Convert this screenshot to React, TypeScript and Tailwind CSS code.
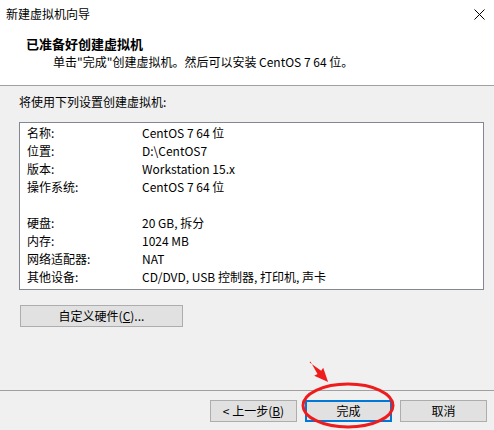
import React from "react";

const rows: [string, string][] = [
  ["名称:", "CentOS 7 64 位"],
  ["位置:", "D:\\CentOS7"],
  ["版本:", "Workstation 15.x"],
  ["操作系统:", "CentOS 7 64 位"],
  ["", ""],
  ["硬盘:", "20 GB, 拆分"],
  ["内存:", "1024 MB"],
  ["网络适配器:", "NAT"],
  ["其他设备:", "CD/DVD, USB 控制器, 打印机, 声卡"],
];

function WinButton({ children, primary }: { children: React.ReactNode; primary?: boolean }) {
  return (
    <button
      className={
        primary
          ? "w-[87px] h-[22px] bg-[#e1e1e1] border-2 border-[#0078d7] text-[12px] leading-none text-black"
          : "w-[87px] h-[22px] bg-[#e1e1e1] border border-[#adadad] text-[12px] leading-none text-black"
      }
    >
      {children}
    </button>
  );
}

export default function App() {
  return (
    <div
      className="relative w-[494px] h-[430px] bg-[#f0f0f0] overflow-hidden flex flex-col text-black"
      style={{ fontFamily: '"Noto Sans CJK SC", "Noto Sans", sans-serif' }}
    >
      {/* title bar + header */}
      <div className="bg-white border-b border-[#a0a0a0]">
        <div className="h-[28px] flex items-center justify-between pl-[6px] pr-[9px]">
          <span className="text-[12px]">新建虚拟机向导</span>
          <svg width="11" height="11" viewBox="0 0 11 11">
            <path d="M0.5 0.5 L10.5 10.5 M10.5 0.5 L0.5 10.5" stroke="#000" strokeWidth="1" />
          </svg>
        </div>
        <div className="h-[57px] pt-[7px]">
          <div className="pl-[26px] text-[13px] font-bold leading-[18px]">已准备好创建虚拟机</div>
          <div className="pl-[53px] text-[12px] leading-[18px]">单击"完成"创建虚拟机。然后可以安装 CentOS 7 64 位。</div>
        </div>
      </div>

      {/* body */}
      <div className="flex-1 flex flex-col px-[19px]">
        <div className="mt-[7px] text-[12px] leading-[18px]">将使用下列设置创建虚拟机:</div>
        <div className="mt-[11px] w-[465px] h-[168px] bg-white border border-[#828790] pt-px pl-[7px]">
          {rows.map(([k, v], i) => (
            <div key={i} className="flex h-[18px] items-center text-[12px]">
              <span className="w-[115px]">{k}</span>
              <span>{v}</span>
            </div>
          ))}
        </div>
        <button className="mt-[15px] ml-px w-[163px] h-[22px] bg-[#e1e1e1] border border-[#adadad] text-[12px] leading-none">
          自定义硬件(<span className="underline">C</span>)...
        </button>
      </div>

      {/* footer */}
      <div className="border-t border-[#a0a0a0] h-[40px] flex items-start justify-end gap-[8px] pt-[9px] pr-[7px]">
        <WinButton>
          &lt; 上一步(<span className="underline">B</span>)
        </WinButton>
        <WinButton primary>完成</WinButton>
        <WinButton>取消</WinButton>
      </div>

      {/* red annotation */}
      <svg className="absolute inset-0 pointer-events-none" width="494" height="430">
        <ellipse cx="348" cy="405.5" rx="45" ry="21.5" fill="none" stroke="#ee1c1c" strokeWidth="3" />
        <polygon
          points="309.6,362.4 321.2,370.7 323.2,367.7 328.1,382.1 314.2,375.7 317.5,374.1 310.4,361.6"
          fill="#ee1c1c"
        />
      </svg>
    </div>
  );
}
